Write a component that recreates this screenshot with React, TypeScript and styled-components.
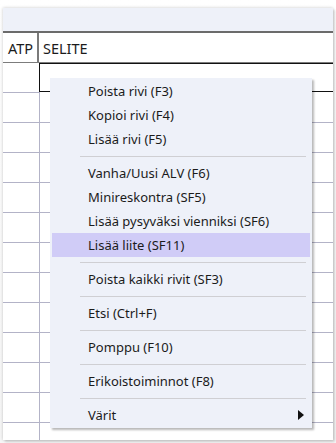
import React from "react";
import styled, { createGlobalStyle } from "styled-components";

const GlobalStyle = createGlobalStyle`
  html, body {
    margin: 0;
    padding: 0;
    background: #ffffff;
  }
  body {
    font-family: "Noto Sans", "Open Sans", sans-serif;
    color: #1b1b1b;
  }
`;

type MenuEntry = { label: string; highlighted?: boolean; submenu?: boolean } | "sep";

const menuEntries: MenuEntry[] = [
  { label: "Poista rivi (F3)" },
  { label: "Kopioi rivi (F4)" },
  { label: "Lisää rivi (F5)" },
  "sep",
  { label: "Vanha/Uusi ALV (F6)" },
  { label: "Minireskontra (SF5)" },
  { label: "Lisää pysyväksi vienniksi (SF6)" },
  { label: "Lisää liite (SF11)", highlighted: true },
  "sep",
  { label: "Poista kaikki rivit (SF3)" },
  "sep",
  { label: "Etsi (Ctrl+F)" },
  "sep",
  { label: "Pomppu (F10)" },
  "sep",
  { label: "Erikoistoiminnot (F8)" },
  "sep",
  { label: "Värit", submenu: true },
];

const EMPTY_ROWS = 12;

export default function App() {
  return (
    <>
      <GlobalStyle />
      <Page>
        <Window>
          <TitleBand />
          <HeaderRow>
            <AtpHeader>ATP</AtpHeader>
            <SeliteHeader>SELITE</SeliteHeader>
          </HeaderRow>
          <Row>
            <AtpCell />
            <SelectedCell />
          </Row>
          {Array.from({ length: EMPTY_ROWS }).map((_, i) => (
            <Row key={i}>
              <AtpCell />
              <SeliteCell />
            </Row>
          ))}

          <Menu>
            {menuEntries.map((entry, i) =>
              entry === "sep" ? (
                <Separator key={i} />
              ) : (
                <MenuItem key={i} $highlighted={entry.highlighted}>
                  <span>{entry.label}</span>
                  {entry.submenu && <SubArrow />}
                </MenuItem>
              )
            )}
          </Menu>
        </Window>
      </Page>
    </>
  );
}

/* Styles */

const Page = styled.div`
  width: 336px;
  height: 443px;
  background: linear-gradient(#ffffff, #f6f6f6);
  padding: 8px 3px 0 3px;
  box-sizing: border-box;
  overflow: hidden;
`;

const Window = styled.div`
  position: relative;
  width: 330px;
  height: 432px;
  background: #ffffff;
  box-shadow: 0 0 3px rgba(0, 0, 0, 0.22), 2px 2px 2px rgba(0, 0, 0, 0.12);
  overflow: hidden;
`;

const TitleBand = styled.div`
  height: 23px;
  background: #eef1f9;
  border-bottom: 2px solid #6b6b6b;
`;

const HeaderRow = styled.div`
  display: flex;
  height: 29px;
  border-bottom: 1px solid #7c7c7c;
  font-size: 14.5px;
`;

const AtpHeader = styled.div`
  width: 36px;
  border-right: 2px solid #7a7a7a;
  display: flex;
  align-items: center;
  padding-left: 5px;
  box-sizing: border-box;
`;

const SeliteHeader = styled.div`
  flex: 1;
  display: flex;
  align-items: center;
  padding-left: 4px;
`;

const Row = styled.div`
  display: flex;
  height: 30px;
`;

const AtpCell = styled.div`
  width: 37px;
  border-right: 1px solid #b3b3c7;
  border-bottom: 1px solid #b3b3c7;
  box-sizing: border-box;
`;

const SeliteCell = styled.div`
  flex: 1;
  border-bottom: 1px solid #b3b3c7;
`;

const SelectedCell = styled.div`
  flex: 1;
  border: 1px solid #111111;
  border-right: none;
  margin-left: -1px;
  margin-bottom: 1px;
`;

const Menu = styled.div`
  position: absolute;
  left: 47px;
  top: 70px;
  width: 262px;
  padding: 1px 2px;
  box-sizing: border-box;
  background: #eef1f9;
  box-shadow: 2px 2px 2px rgba(0, 0, 0, 0.28);
  font-size: 13px;
`;

const MenuItem = styled.div<{ $highlighted?: boolean }>`
  position: relative;
  height: 24px;
  display: flex;
  align-items: center;
  padding-left: 36px;
  background: ${(p) => (p.$highlighted ? "#d0ccf7" : "transparent")};
  white-space: nowrap;
`;

const Separator = styled.div`
  height: 10px;
  display: flex;
  align-items: center;
  padding-left: 28px;
  padding-right: 4px;

  &::after {
    content: "";
    flex: 1;
    height: 1px;
    background: #cfcfd3;
  }
`;

const SubArrow = styled.span`
  position: absolute;
  right: 6px;
  top: 7px;
  width: 0;
  height: 0;
  border-top: 5px solid transparent;
  border-bottom: 5px solid transparent;
  border-left: 6px solid #111111;
`;
